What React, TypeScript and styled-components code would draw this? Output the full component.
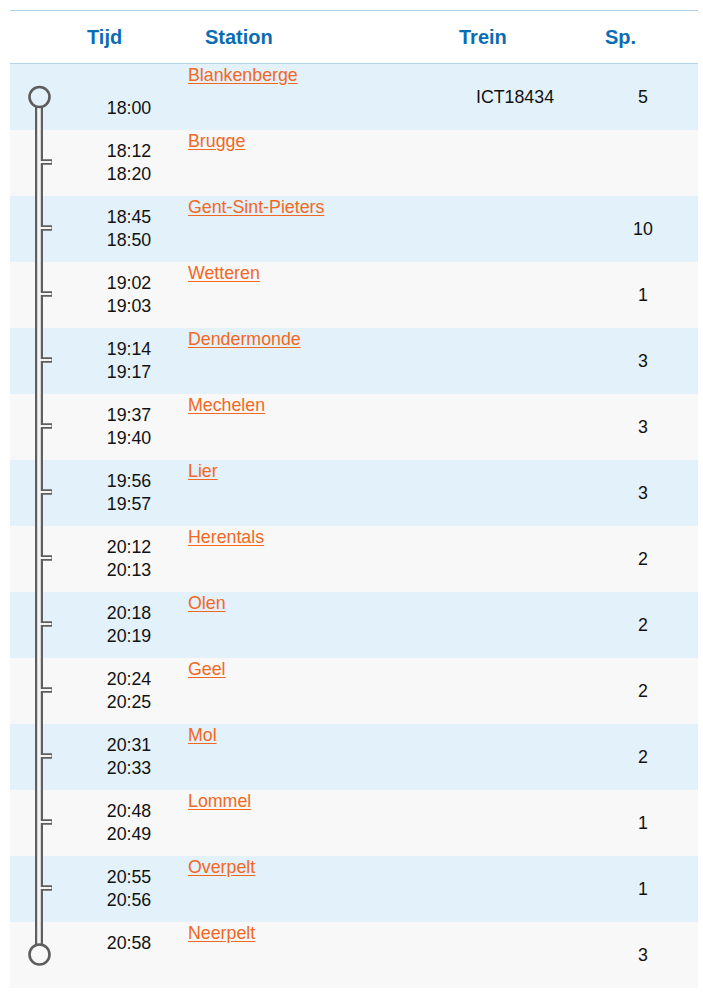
import React from "react";
import styled, { createGlobalStyle } from "styled-components";

const GlobalStyle = createGlobalStyle`
  html, body { margin: 0; padding: 0; background: #ffffff; }
  body { font-family: "Liberation Sans", Arial, sans-serif; }
`;

const Page = styled.div`
  padding: 10px 5px 9px 10px;
`;

const Table = styled.div`
  width: 688px;
  border-top: 1px solid #b3d3ec;
`;

const cols = "60px 118px 254px 146px 110px";

const HeaderRow = styled.div`
  display: grid;
  grid-template-columns: ${cols};
  height: 52px;
  align-items: center;
  border-bottom: 1px solid #b3d3ec;
  background: #ffffff;
`;

const HeaderCell = styled.div`
  padding-left: 17px;
  font-size: 20px;
  font-weight: 700;
  color: #0b6cb6;
`;

const Row = styled.div<{ $alt: boolean }>`
  display: grid;
  grid-template-columns: ${cols};
  height: 66px;
  background: ${(p) => (p.$alt ? "#f8f8f8" : "#e3f1fb")};
  font-size: 17.8px;
  color: #111;
`;

const TimeCell = styled.div`
  padding-top: 10px;
  line-height: 23px;
  text-align: center;
  display: flex;
  flex-direction: column;
`;

const TimeLine = styled.span`
  height: 23px;
`;

const StationCell = styled.div`
  padding-top: 1px;
  line-height: 20px;
`;

const StationLink = styled.a`
  color: #f26822;
  text-decoration: underline;
  text-underline-offset: 2px;
  cursor: pointer;
`;

const CenterCell = styled.div`
  display: flex;
  align-items: center;
  justify-content: center;
`;

const TrackSvg = styled.svg`
  display: block;
`;

type Kind = "start" | "mid" | "end";

function Track({ kind }: { kind: Kind }) {
  const x = 29;
  const cy = kind === "start" ? 33 : 32.5;
  const y1 = kind === "start" ? cy + 10 : 0;
  const y2 = kind === "end" ? cy - 10 : 66;
  return (
    <TrackSvg width="60" height="66" viewBox="0 0 60 66">
      <line x1={x} y1={y1} x2={x} y2={y2} stroke="#5f5f5f" strokeWidth="8" />
      {kind === "mid" && (
        <line x1={x} y1={32} x2={42} y2={32} stroke="#5f5f5f" strokeWidth="5.5" />
      )}
      <line x1={x} y1={y1} x2={x} y2={y2} stroke="#f4f4f4" strokeWidth="3.6" />
      {kind === "mid" && (
        <line x1={x} y1={32} x2={41.5} y2={32} stroke="#f4f4f4" strokeWidth="2" />
      )}
      {kind !== "mid" && (
        <circle cx={x + 0.5} cy={cy} r={10} fill="none" stroke="#5d5d5d" strokeWidth="2.6" />
      )}
    </TrackSvg>
  );
}

type Stop = { name: string; arr: string; dep: string; train?: string; sp: string };

const stops: Stop[] = [
  { name: "Blankenberge", arr: "", dep: "18:00", train: "ICT18434", sp: "5" },
  { name: "Brugge", arr: "18:12", dep: "18:20", sp: "" },
  { name: "Gent-Sint-Pieters", arr: "18:45", dep: "18:50", sp: "10" },
  { name: "Wetteren", arr: "19:02", dep: "19:03", sp: "1" },
  { name: "Dendermonde", arr: "19:14", dep: "19:17", sp: "3" },
  { name: "Mechelen", arr: "19:37", dep: "19:40", sp: "3" },
  { name: "Lier", arr: "19:56", dep: "19:57", sp: "3" },
  { name: "Herentals", arr: "20:12", dep: "20:13", sp: "2" },
  { name: "Olen", arr: "20:18", dep: "20:19", sp: "2" },
  { name: "Geel", arr: "20:24", dep: "20:25", sp: "2" },
  { name: "Mol", arr: "20:31", dep: "20:33", sp: "2" },
  { name: "Lommel", arr: "20:48", dep: "20:49", sp: "1" },
  { name: "Overpelt", arr: "20:55", dep: "20:56", sp: "1" },
  { name: "Neerpelt", arr: "20:58", dep: "", sp: "3" },
];

export default function App() {
  return (
    <Page>
      <GlobalStyle />
      <Table>
        <HeaderRow>
          <div />
          <HeaderCell>Tijd</HeaderCell>
          <HeaderCell>Station</HeaderCell>
          <HeaderCell>Trein</HeaderCell>
          <HeaderCell>Sp.</HeaderCell>
        </HeaderRow>
        {stops.map((s, i) => {
          const kind: Kind = i === 0 ? "start" : i === stops.length - 1 ? "end" : "mid";
          return (
            <Row key={s.name} $alt={i % 2 === 1}>
              <Track kind={kind} />
              <TimeCell>
                <TimeLine>{s.arr}</TimeLine>
                <TimeLine>{s.dep}</TimeLine>
              </TimeCell>
              <StationCell>
                <StationLink>{s.name}</StationLink>
              </StationCell>
              <CenterCell>{s.train ?? ""}</CenterCell>
              <CenterCell>{s.sp}</CenterCell>
            </Row>
          );
        })}
      </Table>
    </Page>
  );
}
